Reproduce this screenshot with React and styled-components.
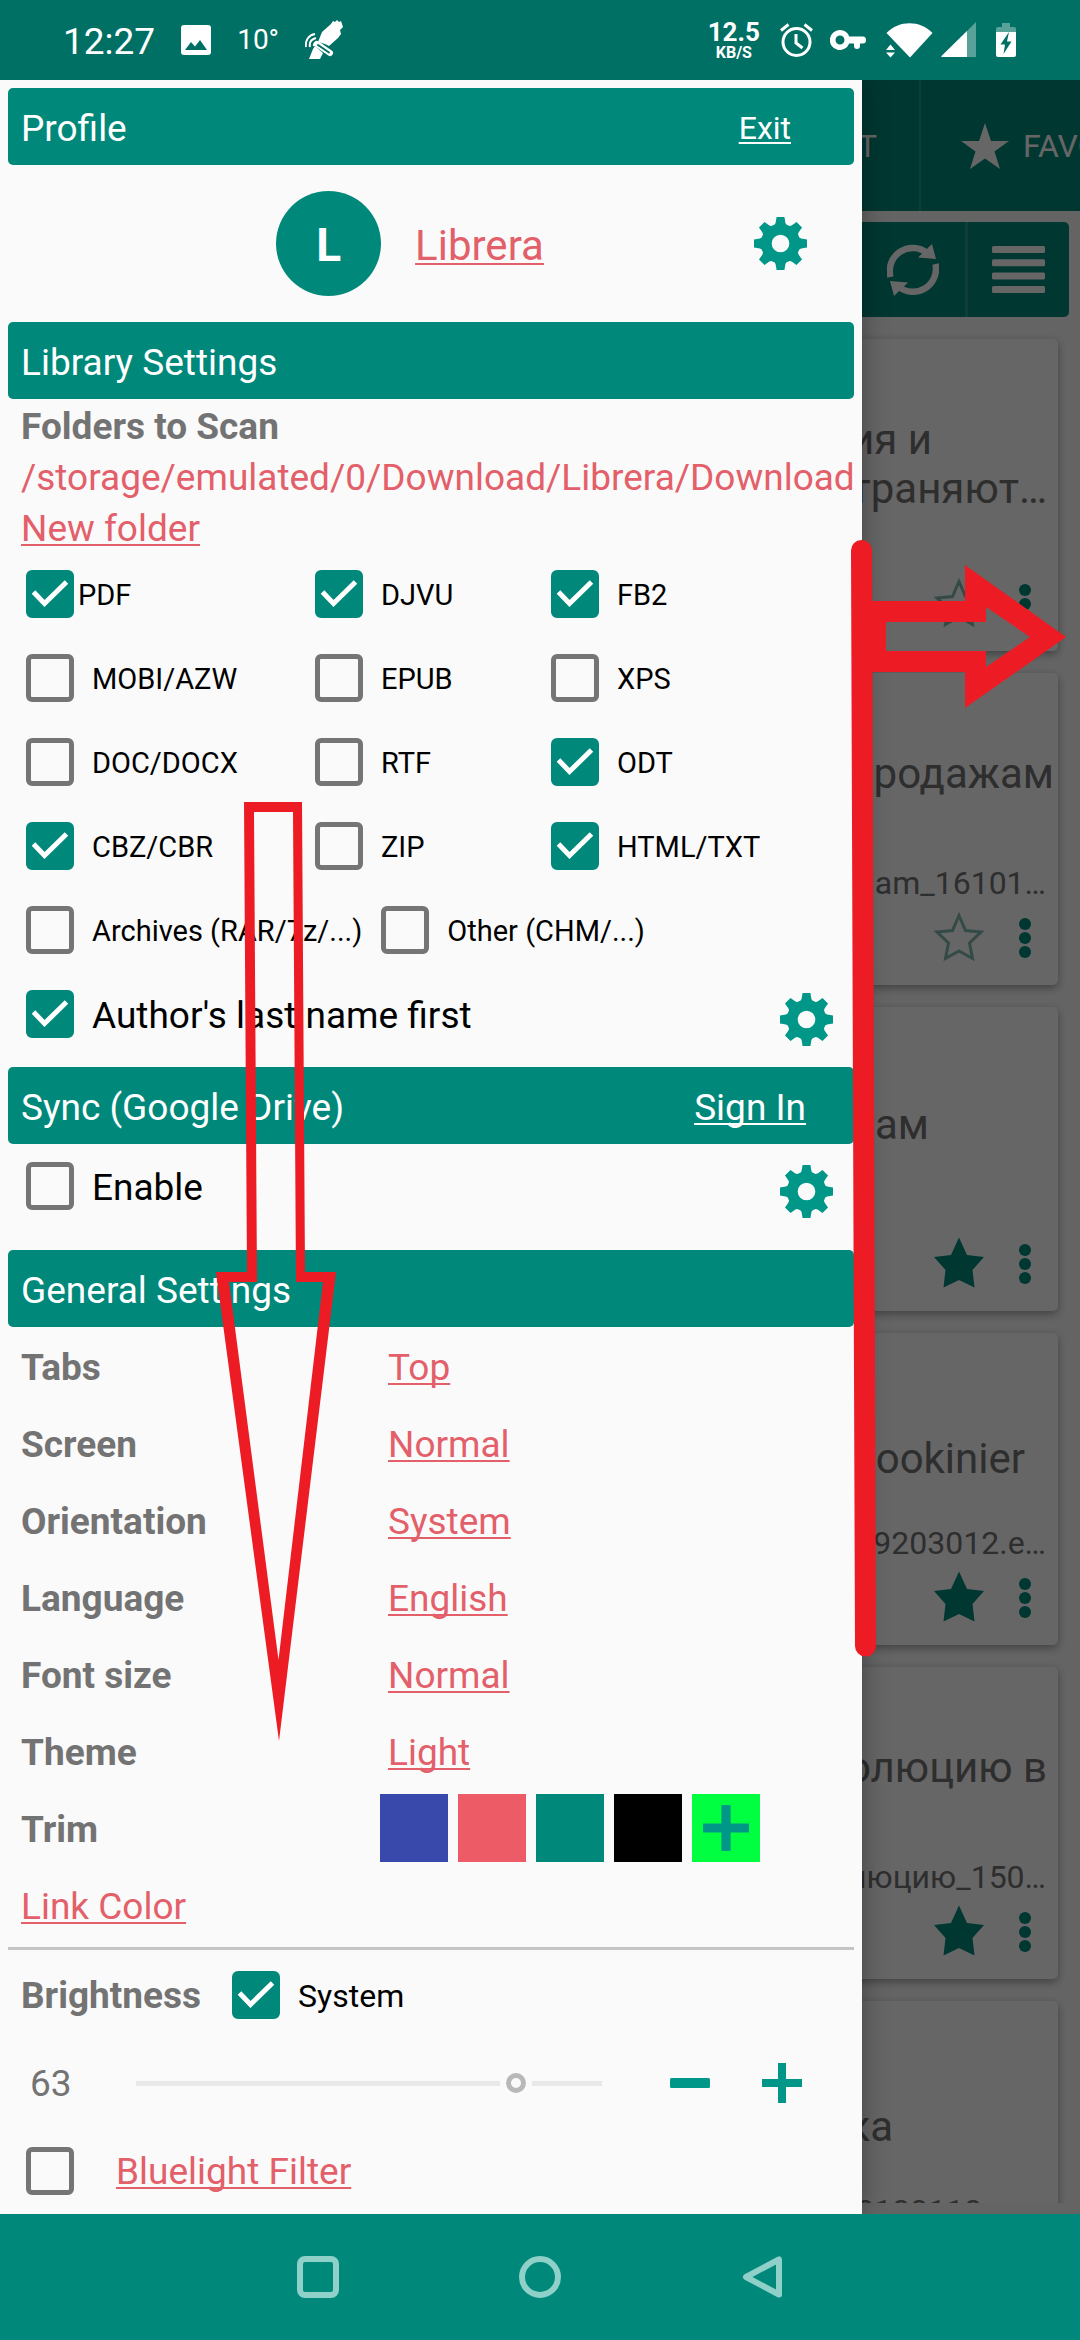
import React, { useId } from "react";
import styled, { createGlobalStyle } from "styled-components";

const teal = "#00897b";
const accent = "#009688";
const paper = "#fafafa";
const link = "#e35f6a";
const muted = "#737373";

const GlobalStyle = createGlobalStyle`
  *, *::before, *::after { box-sizing: border-box; }
  body { margin: 0; background: ${teal}; }
  body, button, input { font-family: Roboto, "Noto Sans", sans-serif; }
  h1, h2, p, ul { margin: 0; padding: 0; }
  ul { list-style: none; }
`;

const Screen = styled.div`
  position: relative;
  display: flex;
  flex-direction: column;
  min-height: 100vh;
  overflow: hidden;
  font-size: 37px;
`;

/* ---------- status bar ---------- */

const StatusBar = styled.header`
  display: flex;
  align-items: center;
  justify-content: space-between;
  height: 80px;
  padding: 0 64px 0 63px;
  background: #007065;
  color: #fff;
`;

const StatusGroup = styled.div`
  display: flex;
  align-items: center;
  gap: ${(p) => p.$gap}px;
`;

const Clock = styled.span`
  line-height: 44px;
  padding-top: 3px;
`;

const Temperature = styled.span`
  font-size: 28px;
  line-height: 34px;
`;

const Speed = styled.div`
  display: flex;
  flex-direction: column;
  align-items: center;
  font-weight: 700;
`;

const SpeedValue = styled.span`
  font-size: 26px;
  line-height: 26px;
`;

const SpeedUnit = styled.span`
  font-size: 16px;
  line-height: 16px;
`;

/* ---------- library behind the drawer ---------- */

const Main = styled.main`
  position: relative;
  flex: 1;
  background: ${paper};
  overflow: hidden;
`;

const Library = styled.div`
  position: absolute;
  inset: 0;
  display: flex;
  flex-direction: column;
  padding-bottom: 11px;
  overflow: hidden;
`;

const TabBar = styled.nav`
  display: flex;
  justify-content: flex-end;
  flex: none;
  height: 131px;
  background: ${teal};
`;

const Tab = styled.button`
  display: flex;
  align-items: center;
  gap: 14px;
  width: ${(p) => p.$width}px;
  padding: 0 ${(p) => (p.$end ? 42 : 0)}px 0 40px;
  justify-content: ${(p) => (p.$end ? "flex-end" : "flex-start")};
  border: 0;
  border-right: ${(p) => (p.$end ? "2px solid #26998d" : "0")};
  background: none;
  color: #fff;
  font-size: 32px;
  white-space: nowrap;
  overflow: hidden;
  & > svg { flex: none; }
`;

const Toolbar = styled.div`
  display: flex;
  justify-content: flex-end;
  flex: none;
  height: 95px;
  margin: 11px 11px 0;
  border-radius: 5px;
  background: ${teal};
`;

const ToolButton = styled.button`
  display: grid;
  place-items: center;
  width: 104px;
  padding: 0;
  border: 0;
  background: none;
  & + & { border-left: 3px solid #26998d; }
`;

const BookList = styled.ul`
  display: flex;
  flex-direction: column;
  gap: 22px;
  flex: 1;
  min-height: 0;
  padding: 22px 22px 0;
  overflow: hidden;
`;

const BookCard = styled.li`
  flex: none;
  padding: ${(p) => (p.$short ? 68 : 76)}px 0 18px;
  border-radius: 5px;
  background: #fff;
  box-shadow: 0 3px 8px rgba(0, 0, 0, 0.35);
  color: ${muted};
  text-align: right;
`;

const BookTitle = styled.h2`
  display: flex;
  flex-direction: column;
  justify-content: ${(p) => (p.$top ? "flex-start" : "center")};
  height: 98px;
  font-size: 42px;
  font-weight: 400;
  line-height: 49px;
`;

const ClippedLine = styled.span`
  padding-right: ${(p) => p.$end}px;
`;

const FileName = styled.p`
  height: 38px;
  margin: 17px 0 5px;
  padding-right: ${(p) => p.$end || 12}px;
  font-size: 32px;
  line-height: 38px;
`;

const CardActions = styled.div`
  display: flex;
  align-items: center;
  justify-content: flex-end;
  gap: 34px;
  height: 60px;
  padding-right: 26px;
`;

const IconButton = styled.button`
  display: grid;
  place-items: center;
  flex: none;
  padding: 0;
  border: 0;
  background: none;
`;

const Scrim = styled.div`
  position: absolute;
  inset: 0;
  background: rgba(0, 0, 0, 0.6);
`;

/* ---------- drawer ---------- */

const Drawer = styled.aside`
  position: relative;
  width: 80%;
  max-width: 862px;
  padding: 8px 8px 0;
  background: ${paper};
  box-shadow: 0 0 24px rgba(0, 0, 0, 0.35);
`;

const SectionBar = styled.div`
  display: flex;
  align-items: center;
  justify-content: space-between;
  height: 77px;
  padding: 3px ${(p) => p.$end || 13}px 0 13px;
  border-radius: 5px;
  background: ${teal};
  color: #fff;
`;

const SectionTitle = styled.h2`
  font-size: 37px;
  font-weight: 400;
`;

const Link = styled.a`
  color: ${(p) => (p.$light ? "#fff" : link)};
  font-size: ${(p) => p.$size || 37}px;
  text-decoration: ${(p) => (p.$plain ? "none" : "underline")};
  text-decoration-thickness: 2px;
  text-underline-offset: 3px;
  text-decoration-skip-ink: none;
  white-space: nowrap;
`;

const ProfileRow = styled.div`
  display: flex;
  align-items: center;
  height: 157px;
  padding: 0 47px 0 58px;
`;

const Identity = styled.div`
  display: flex;
  align-items: center;
  gap: 34px;
  margin: 0 auto;
`;

const ProfileName = styled.span`
  padding-top: 3px;
`;

const Avatar = styled.span`
  display: grid;
  place-items: center;
  width: 105px;
  height: 105px;
  padding-top: 3px;
  border-radius: 50%;
  background: ${teal};
  color: #fff;
  font-size: 46px;
  font-weight: 700;
`;

const Folders = styled.div`
  display: flex;
  flex-direction: column;
  align-items: flex-start;
  padding: 2px 0 0 13px;
  line-height: 51px;
`;

const Caption = styled.span`
  color: ${muted};
  font-weight: 700;
`;

const Formats = styled.div`
  display: grid;
  grid-template-columns: 289px 236px 1fr;
  margin-top: -2px;
  padding-left: 18px;
`;

const FormatLine = styled.div`
  display: flex;
  gap: 19px;
  padding-left: 18px;
`;

const Option = styled.label`
  display: flex;
  align-items: center;
  gap: ${(p) => (p.$tight ? 4 : 18)}px;
  height: 84px;
  font-size: ${(p) => p.$size || 29}px;
  color: #000;
  white-space: nowrap;
`;

const OptionText = styled.span`
  padding-top: 2px;
`;

const BoxFrame = styled.span`
  position: relative;
  flex: none;
  width: 48px;
  height: 48px;
`;

const BoxInput = styled.input`
  appearance: none;
  display: block;
  width: 48px;
  height: 48px;
  margin: 0;
  border: 5px solid #757575;
  border-radius: 6px;
  &:checked { border-color: ${teal}; background: ${teal}; }
  & + svg { display: none; }
  &:checked + svg { display: block; }
`;

const Tick = styled.svg`
  position: absolute;
  inset: 0;
  pointer-events: none;
`;

const OptionRow = styled.div`
  display: flex;
  align-items: flex-start;
  justify-content: space-between;
  height: 95px;
  margin-bottom: ${(p) => (p.$spaced ? 11 : 0)}px;
  padding: 0 21px 0 18px;
  & > button { align-self: center; }
`;

const Settings = styled.div`
  padding-top: 2px;
`;

const SettingRow = styled.div`
  display: grid;
  grid-template-columns: 359px 1fr;
  align-items: center;
  height: 77px;
  padding-left: 13px;
`;

const SettingValue = styled.div`
  padding-left: 8px;
`;

const Swatches = styled.div`
  display: flex;
  align-self: start;
  gap: 10px;
  padding-top: 3px;
`;

const Swatch = styled.button`
  display: grid;
  place-items: center;
  width: 68px;
  height: 68px;
  padding: 0;
  border: 0;
  background: ${(p) => p.$color};
`;

const Divider = styled.hr`
  height: 3px;
  margin: 2px 0 0;
  border: 0;
  background: #c4c4c4;
`;

const BrightnessRow = styled.div`
  display: flex;
  align-items: center;
  gap: 31px;
  height: 90px;
  padding-left: 13px;
`;

const SliderRow = styled.div`
  display: flex;
  align-items: center;
  height: 86px;
  padding: 0 26px 0 22px;
`;

const SliderValue = styled.output`
  width: 106px;
  color: ${muted};
`;

const Slider = styled.input`
  appearance: none;
  flex: 1;
  min-width: 0;
  height: 30px;
  margin: 0 42px 0 0;
  background: none;
  &::-webkit-slider-runnable-track {
    height: 5px;
    background: #e8e8e8;
  }
  &::-webkit-slider-thumb {
    appearance: none;
    width: 20px;
    height: 20px;
    margin-top: -8px;
    border: 5px solid #b8b8b8;
    border-radius: 50%;
    background: ${paper};
    box-shadow: 0 0 0 6px ${paper};
  }
`;

const StepButton = styled(IconButton)`
  width: 92px;
  height: 84px;
`;

const FilterRow = styled.div`
  display: flex;
  align-items: center;
  gap: 42px;
  height: 88px;
  padding: 2px 0 0 18px;
`;

const NavBar = styled.nav`
  display: flex;
  align-items: center;
  justify-content: center;
  gap: 180px;
  height: 126px;
  background: ${teal};
`;

/* ---------- hand-drawn guide arrows on top ---------- */

const Annotations = styled.svg`
  position: absolute;
  top: 0;
  left: 0;
  pointer-events: none;
`;

function Gear() {
  return (
    <svg width="53" height="53" viewBox="-27 -27 54 54" fill={accent}>
      <circle r="14.5" fill="none" stroke={accent} strokeWidth="11" />
      {[0, 45, 90, 135, 180, 225, 270, 315].map((a) => (
        <path key={a} d="M-7 -17.500L-5 -21L-4 -27H4L5 -21L7 -17.500Z" transform={`rotate(${a})`} />
      ))}
    </svg>
  );
}

function Plus({ size, thick, color }) {
  return (
    <svg width={size} height={size} viewBox="0 0 40 40" stroke={color} strokeWidth={thick}>
      <path d="M20 0V40M0 20H40" />
    </svg>
  );
}

const starPath = "M25 0L33 17.500L50 19.500L38.500 32.500L40.500 50L25 42.500L9.500 50L11.500 32.500L0 19.500L17 17.500Z";

function Star({ filled }) {
  return (
    <svg width="50" height="52" viewBox="0 0 50 51">
      {filled ? (
        <path d={starPath} fill={teal} />
      ) : (
        <path
          d="M25 4L31.500 19L47 20.500L35.500 31.500L38.500 47L25 39.500L11.500 47L14.500 31.500L3 20.500L18.500 19Z"
          fill="none"
          stroke="#80b9b2"
          strokeWidth="3"
        />
      )}
    </svg>
  );
}

function Dots() {
  return (
    <svg width="14" height="44" viewBox="0 0 14 44" fill={teal}>
      <circle cx="7" cy="9" r="6" />
      <circle cx="7" cy="23" r="6" />
      <circle cx="7" cy="37" r="6" />
    </svg>
  );
}

function Check({ id, checked, label }) {
  return (
    <BoxFrame>
      <BoxInput type="checkbox" id={id} defaultChecked={checked} aria-label={label} />
      <Tick width="48" height="48" viewBox="0 0 48 48" fill="none" stroke="#fff" strokeWidth="5">
        <path d="M7.500 22L18.500 33.500L40.500 12" />
      </Tick>
    </BoxFrame>
  );
}

function CheckOption({ label, checked, size, tight }) {
  const id = useId();
  return (
    <Option htmlFor={id} $size={size} $tight={tight}>
      <Check id={id} checked={checked} />
      <OptionText>{label}</OptionText>
    </Option>
  );
}

function Section({ title, action, size, end }) {
  return (
    <SectionBar $end={end}>
      <SectionTitle>{title}</SectionTitle>
      {action && <Link href="#" $light $size={size}>{action}</Link>}
    </SectionBar>
  );
}

const formats = [
  ["PDF", true], ["DJVU", true], ["FB2", true],
  ["MOBI/AZW", false], ["EPUB", false], ["XPS", false],
  ["DOC/DOCX", false], ["RTF", false], ["ODT", true],
  ["CBZ/CBR", true], ["ZIP", false], ["HTML/TXT", true],
];

const settings = [
  ["Tabs", "Top"],
  ["Screen", "Normal"],
  ["Orientation", "System"],
  ["Language", "English"],
  ["Font size", "Normal"],
  ["Theme", "Light"],
];

const books = [
  { lines: [["ия и", 126], ["траняют…", 11]], file: "" },
  { lines: [["родажам", 4]], top: true, file: "am_16101…" },
  { lines: [["ам", 129]], short: true, file: "", starred: true },
  { lines: [["ookinier", 33]], file: "9203012.e…", starred: true },
  { lines: [["олюцию в", 11]], top: true, file: "люцию_150…", starred: true },
  { lines: [["ка", 165]], file: "0100110", fileEnd: 76, starred: true },
];

export default function App() {
  return (
    <Screen>
      <GlobalStyle />
      <StatusBar>
        <StatusGroup $gap={26}>
          <Clock>12:27</Clock>
          <svg width="30" height="30" viewBox="0 0 30 30">
            <rect width="30" height="30" rx="3" fill="#fff" />
            <path d="M4 25L10 17L14 21.500L19 15L26 25Z" fill="#007065" />
          </svg>
          <Temperature>10°</Temperature>
          <svg width="38" height="40" viewBox="0 0 38 40" fill="#fff">
            <path d="M13 22L17 12L26 4L28 1L30 2L32 0L34 2L36 1L37 4L38 7L35 10L36 14L33 18L24 26L20 24Z" />
            <path d="M8 29L10 26L18 33L15 39H4Z" />
            <path d="M12 24L25 33" stroke="#fff" strokeWidth="6" strokeLinecap="round" />
            <path d="M13 25L24 32.500" stroke="#007065" strokeWidth="2" strokeLinecap="round" />
            <path d="M1 27C0 20 4 15 10 14M5 27C4 22 7 19 11 18M9 26C8.500 24 10 22 12 22" fill="none" stroke="#fff" strokeWidth="2" />
          </svg>
        </StatusGroup>
        <StatusGroup $gap={20}>
          <Speed>
            <SpeedValue>12.5</SpeedValue>
            <SpeedUnit>KB/S</SpeedUnit>
          </Speed>
          <StatusGroup $gap={17}>
            <svg width="33" height="35" viewBox="0 0 33 35" fill="none" stroke="#fff" strokeWidth="3">
              <circle cx="16.500" cy="19" r="13.500" />
              <path d="M16 11V20L22.500 25M1 7.500L8.500 1.500M32 7.500L24.500 1.500" />
            </svg>
            <svg width="36" height="20" viewBox="0 0 36 20">
              <path fillRule="evenodd" fill="#fff" d="M10 0A10 10 0 1 0 19.200 13.500H24V16Q24 19 27 19Q30 19 30 16V13.500H33Q36 13.500 36 10Q36 6.500 33 6.500H19.200A10 10 0 0 0 10 0ZM10 5.500A4.500 4.500 0 1 1 10 14.500A4.500 4.500 0 1 1 10 5.500Z" />
            </svg>
          </StatusGroup>
          <StatusGroup $gap={8}>
            <svg width="47" height="35" viewBox="0 0 47 35" fill="#fff">
              <path d="M0.500 10C13 -3 34 -3 46.500 10L24 34.500Z" />
              <path d="M0 27L4.500 21.500L9 27ZM0 29.500L4.500 34.500L9 29.500Z" />
            </svg>
            <svg width="35" height="36" viewBox="0 0 35 36">
              <path d="M35 0V35H0Z" fill="#fff" opacity="0.35" />
              <path d="M26 9V35H1Q0 35 0.500 34Z" fill="#fff" />
            </svg>
          </StatusGroup>
          <svg width="20" height="35" viewBox="0 0 20 35">
            <path d="M6 0H14V4H18Q20 4 20 6V9H0V6Q0 4 2 4H6Z" fill="#fff" opacity="0.35" />
            <path d="M0 9H20V32Q20 34 18 34H2Q0 34 0 32Z" fill="#fff" />
            <path d="M13 9L4.500 21.500H9L7.500 31L15.500 18.500H11Z" fill="#007065" />
          </svg>
        </StatusGroup>
      </StatusBar>

      <Main>
        <Library>
          <TabBar>
            <Tab $width={160} $end>T</Tab>
            <Tab $width={159}>
              <svg width="48" height="46" viewBox="0 0 48 46" fill="#fff">
                <path d="M24 0L30 18H48L33.500 28.500L39 46L24 35.500L9 46L14.500 28.500L0 18H18Z" />
              </svg>
              FAVO
            </Tab>
          </TabBar>
          <Toolbar>
            <ToolButton aria-label="Refresh">
              <svg width="52" height="52" viewBox="0 0 52 52">
                <path d="M3.500 33A23 23 0 0 1 40 9M48.500 20A23 23 0 0 1 12 43" fill="none" stroke="#fff" strokeWidth="6.500" />
                <path d="M45 0L49 15L31 13.500ZM7 52L3 37L21 38.500Z" fill="#fff" />
              </svg>
            </ToolButton>
            <ToolButton aria-label="List view">
              <svg width="53" height="47" viewBox="0 0 53 47" fill="#fff">
                {[0, 13.3, 26.6, 40].map((y) => (
                  <rect key={y} y={y} width="53" height="7" rx="1.500" />
                ))}
              </svg>
            </ToolButton>
          </Toolbar>
          <BookList>
            {books.map((b, i) => (
              <BookCard key={i} $short={b.short}>
                <BookTitle $top={b.top}>
                  {b.lines.map(([text, end]) => (
                    <ClippedLine key={text} $end={end}>{text}</ClippedLine>
                  ))}
                </BookTitle>
                <FileName $end={b.fileEnd}>{b.file}</FileName>
                <CardActions>
                  <IconButton aria-label="Favorite"><Star filled={b.starred} /></IconButton>
                  <IconButton aria-label="More"><Dots /></IconButton>
                </CardActions>
              </BookCard>
            ))}
          </BookList>
        </Library>
        <Scrim />

        <Drawer>
          <Section title="Profile" action="Exit" size={32} end={63} />
          <ProfileRow>
            <Identity>
              <Avatar>L</Avatar>
              <ProfileName><Link href="#" $size={42}>Librera</Link></ProfileName>
            </Identity>
            <IconButton aria-label="Profile settings"><Gear /></IconButton>
          </ProfileRow>

          <Section title="Library Settings" />
          <Folders>
            <Caption>Folders to Scan</Caption>
            <Link href="#" $plain>/storage/emulated/0/Download/Librera/Download</Link>
            <Link href="#">New folder</Link>
          </Folders>
          <Formats>
            {formats.map(([label, checked]) => (
              <CheckOption key={label} label={label} checked={checked} tight={label === "PDF"} />
            ))}
          </Formats>
          <FormatLine>
            <CheckOption label="Archives (RAR/7z/...)" />
            <CheckOption label="Other (CHM/...)" />
          </FormatLine>
          <OptionRow>
            <CheckOption label="Author's last name first" checked size={37} />
            <IconButton aria-label="Name settings"><Gear /></IconButton>
          </OptionRow>

          <Section title="Sync (Google Drive)" action="Sign In" end={48} />
          <OptionRow $spaced>
            <CheckOption label="Enable" size={37} />
            <IconButton aria-label="Sync settings"><Gear /></IconButton>
          </OptionRow>

          <Section title="General Settings" />
          <Settings>
            {settings.map(([name, value]) => (
              <SettingRow key={name}>
                <Caption>{name}</Caption>
                <SettingValue><Link href="#">{value}</Link></SettingValue>
              </SettingRow>
            ))}
            <SettingRow>
              <Caption>Trim</Caption>
              <Swatches>
                <Swatch $color="#3949ab" aria-label="Indigo" />
                <Swatch $color="#ed5b66" aria-label="Red" />
                <Swatch $color={teal} aria-label="Teal" />
                <Swatch $color="#000" aria-label="Black" />
                <Swatch $color="#00ff40" aria-label="Add color">
                  <Plus size={46} thick={8} color={accent} />
                </Swatch>
              </Swatches>
            </SettingRow>
            <SettingRow>
              <Link href="#">Link Color</Link>
            </SettingRow>
          </Settings>
          <Divider />

          <BrightnessRow>
            <Caption>Brightness</Caption>
            <CheckOption label="System" checked size={32} />
          </BrightnessRow>
          <SliderRow>
            <SliderValue htmlFor="brightness">63</SliderValue>
            <Slider id="brightness" type="range" min="0" max="76" defaultValue="63" aria-label="Brightness" />
            <StepButton aria-label="Decrease">
              <svg width="40" height="10" viewBox="0 0 40 10"><rect width="40" height="10" rx="1.500" fill={accent} /></svg>
            </StepButton>
            <StepButton aria-label="Increase"><Plus size={40} thick={8} color={accent} /></StepButton>
          </SliderRow>
          <FilterRow>
            <Check label="Bluelight Filter" />
            <Link href="#">Bluelight Filter</Link>
          </FilterRow>
        </Drawer>
      </Main>

      <NavBar>
        <IconButton aria-label="Recents">
          <svg width="42" height="42" viewBox="0 0 42 42" fill="none" stroke="#8fd0c9" strokeWidth="6">
            <rect x="3" y="3" width="36" height="36" rx="5" />
          </svg>
        </IconButton>
        <IconButton aria-label="Home">
          <svg width="42" height="42" viewBox="0 0 42 42" fill="none" stroke="#8fd0c9" strokeWidth="6">
            <circle cx="21" cy="21" r="18" />
          </svg>
        </IconButton>
        <IconButton aria-label="Back">
          <svg width="42" height="42" viewBox="0 0 42 42" fill="none" stroke="#8fd0c9" strokeWidth="6" strokeLinejoin="round">
            <path d="M38 3.500V38.500L5 21Z" />
          </svg>
        </IconButton>
      </NavBar>

      <Annotations width="1080" height="2340" viewBox="0 0 1080 2340" fill="#ed1c24">
        <path
          fillRule="evenodd"
          d="M244 802H302L305 1272H336L279 1741L216 1272H247ZM254 812L257 1282H229L278.500 1660L323 1282H296L293 812Z"
        />
        <path d="M861.500 550.500L865.500 1646" stroke="#ed1c24" strokeWidth="21" strokeLinecap="round" />
        <path
          fillRule="evenodd"
          d="M866 601H965V565L1066 637L965 708V672H866ZM886 622V651H986V667L1030 637L986 607V622Z"
        />
      </Annotations>
    </Screen>
  );
}
